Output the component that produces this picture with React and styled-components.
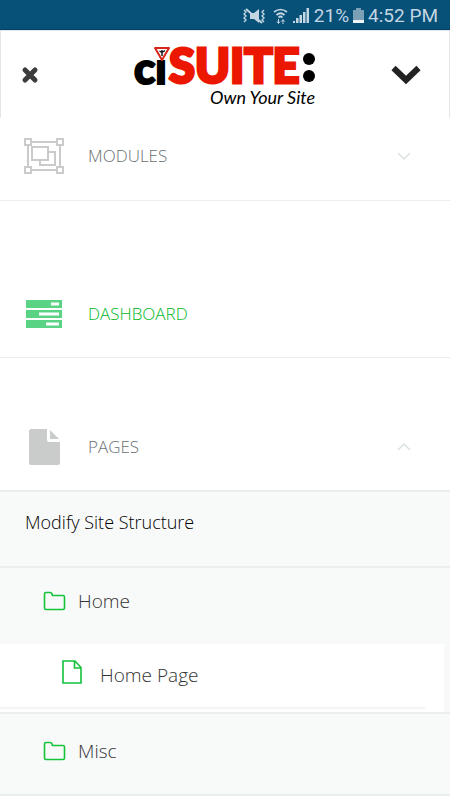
import { useState } from "react";
import styled, { createGlobalStyle } from "styled-components";

const GlobalStyle = createGlobalStyle`
  * {
    box-sizing: border-box;
  }

  body {
    margin: 0;
    background: #fff;
    font-family: "Open Sans", "Noto Sans", sans-serif;
    font-weight: 300;
  }

  button {
    padding: 0;
    border: 0;
    background: none;
    font: inherit;
    color: inherit;
    cursor: pointer;
  }

  svg {
    display: block;
    flex-shrink: 0;
  }
`;

const StatusBar = styled.div`
  display: flex;
  align-items: center;
  justify-content: flex-end;
  gap: 4px;
  height: 30px;
  padding: 2px 12px 0 0;
  border-bottom: 1px solid #063f6b;
  background: #075078;
  color: #c3d6e2;
  font: 400 19px/28px Roboto, sans-serif;
`;

const Header = styled.header`
  display: flex;
  align-items: center;
  height: 88px;
  padding: 0 28px 0 20px;
  border: solid #e6e6e6;
  border-width: 1px 1px 0;
`;

const HeaderButton = styled.button`
  display: flex;
  flex: 1;
  justify-content: ${({ $end }) => ($end ? "flex-end" : "flex-start")};
`;

const MenuRow = styled.button`
  display: flex;
  align-items: center;
  width: 100%;
  padding: ${({ $top }) => $top}px 38px ${({ $bottom }) => $bottom}px 22px;
  border-bottom: ${({ $thick }) => ($thick ? 2 : 1)}px solid #eaeeef;
  color: ${({ $active }) => ($active ? "#00b824" : "#6a7071")};
  font-size: 17px;
  line-height: 24px;
  text-align: left;
`;

const MenuIcon = styled.span`
  display: flex;
  align-items: center;
  justify-content: center;
  width: 44px;
  height: 44px;
  margin-right: 22px;
`;

const MenuLabel = styled.span`
  flex: 1;
`;

const Panel = styled.section`
  background: #f8fafa;
`;

const PanelRow = styled.a`
  display: flex;
  align-items: center;
  gap: 12px;
  padding: ${({ $top }) => $top}px 25px ${({ $bottom }) => $bottom}px 43px;
  border-bottom: ${({ $line }) => ($line ? "2px solid #eaeeee" : "0")};
  color: #333;
  font-size: 19px;
  line-height: 28px;
  text-decoration: none;
`;

const StructureRow = styled(PanelRow)`
  padding-left: 25px;
  color: #000;
  font-size: 18px;
`;

const SubList = styled.div`
  padding-right: 6px;
  border-bottom: 2px solid #eaeeee;
`;

const SubItem = styled.a`
  display: flex;
  gap: 18px;
  padding: 15px 19px 16px 62px;
  background: #fff;
  color: #333;
  font-size: 19px;
  line-height: 32px;
  text-decoration: none;
`;

const SubLine = styled.div`
  height: 5px;
  padding-right: 19px;
  background: #fff;

  &::before {
    content: "";
    display: block;
    height: 2px;
    background: #f2f5f5;
  }
`;

const StatusIcons = () => (
  <svg width="67" height="18" viewBox="0 0 67 18" fill="none" stroke="#c3d6e2" aria-hidden="true">
    <path d="M7 6h4l5-4v14l-5-4H7z" fill="#c3d6e2" stroke="none" />
    <path d="M3 2l16 14" strokeWidth="2" />
    <path d="M1 3l2 2-2 2 2 2-2 2 2 2-2 2M21 3l-2 2 2 2-2 2 2 2-2 2 2 2" strokeWidth="1.4" />
    <path d="M31 5q6.500-5 13 0M33.500 8q4-3.500 8 0M35.500 10.500q2-2 4 0" strokeWidth="1.700" />
    <path d="M35.500 12v4M34 14.500l1.500 2 1.500-2M40 17v-4M38.500 14.500l1.500-2 1.500 2" strokeWidth="1" />
    <path d="M50 16h2v-2h-2zM53 16h2.500v-5H53zM56.500 16h2.500V8h-2.500zM60 16h2.500V5H60zM63.500 16H66V1h-2.500z" fill="#c3d6e2" stroke="none" />
  </svg>
);

const Battery = () => (
  <svg width="11" height="15" viewBox="0 0 11 15" aria-hidden="true">
    <path d="M3 0h5v2h3v10H0V2h3z" fill="#7ba0b5" />
    <path d="M0 12h11v3H0z" fill="#eef4f7" />
  </svg>
);

const Logo = () => (
  <svg width="192" height="86" viewBox="0 0 192 86" role="img" aria-label="ciSUITE: Own Your Site">
    <g fontFamily="Lato, sans-serif" fontWeight="900">
      <text x="9" y="52" fontSize="44" fill="#000" stroke="#000" strokeWidth="2">ci</text>
      <path d="M29 11h16v17H29z" fill="#fff" />
      <text x="44" y="51" fontSize="47" fill="#ec1700" stroke="#ec1700" strokeWidth="3">SUITE</text>
    </g>
    <path d="M30 16h14l-7 12z" fill="#fff" stroke="#d8261c" strokeWidth="2" strokeLinejoin="round" />
    <path d="M37 24v-6M34.500 19l2.500 1.500 3-2" fill="none" stroke="#111" strokeWidth="1.400" />
    <circle cx="184" cy="27" r="6" fill="#000" />
    <circle cx="184" cy="44" r="6" fill="#000" />
    <text
      x="85"
      y="72"
      fontFamily="Lato, sans-serif"
      fontStyle="italic"
      fontWeight="400"
      fontSize="18"
      fill="#000"
    >
      Own Your Site
    </text>
  </svg>
);

const Chevron = ({ up }) => (
  <svg width="16" height="10" viewBox="0 0 16 10" fill="none" stroke="#dce2e4" strokeWidth="1.500" aria-hidden="true">
    <path d={up ? "M2 8l6-6 6 6" : "M2 2l6 6 6-6"} />
  </svg>
);

const GroupIcon = () => (
  <svg width="40" height="36" viewBox="0 0 40 36" fill="none" stroke="#cacccb" strokeWidth="2" aria-hidden="true">
    <path d="M7 4h26M7 32h26M4 7v22M36 7v22" />
    <path d="M1 1h6v6H1zM33 1h6v6h-6zM1 29h6v6H1zM33 29h6v6h-6z" />
    <path d="M8 9h16v13H8zM24 14h7v13H16v-5" />
  </svg>
);

const ServerIcon = () => (
  <svg width="36" height="28" viewBox="0 0 36 28" aria-hidden="true">
    <path d="M0 0h36v8H0zM0 10h36v8H0zM0 20h36v8H0z" fill="#5bd384" />
    <path d="M25 2.500h8v3h-8zM13 12.500h20v3H13zM20 22.500h13v3H20z" fill="#fff" />
  </svg>
);

const FileIcon = () => (
  <svg width="31" height="36" viewBox="0 0 31 36" fill="#cacccb" aria-hidden="true">
    <path d="M2 0h16v11q0 2 2 2h11v21q0 2-2 2H2q-2 0-2-2V2q0-2 2-2z" />
    <path d="M21 1l9 9h-9z" />
  </svg>
);

const FolderOutline = () => (
  <svg width="23" height="20" viewBox="0 0 23 20" fill="none" stroke="#15c23a" strokeWidth="1.600" aria-hidden="true">
    <path d="M1.500 3q0-1.500 1.500-1.500h4Q9 1.500 9.500 4.500H20q1.500 0 1.500 1.500v11q0 1.500-1.500 1.500H3q-1.500 0-1.500-1.500z" />
  </svg>
);

const PageOutline = () => (
  <svg width="20" height="26" viewBox="0 0 20 26" fill="none" stroke="#15c23a" strokeWidth="1.600" aria-hidden="true">
    <path d="M1 2h12l6 6.500V24H1zM12.500 2v7H19" />
  </svg>
);

const App = () => {
  const [pagesOpen, setPagesOpen] = useState(true);

  return (
    <>
      <GlobalStyle />
      <StatusBar>
        <StatusIcons />
        <span>21%</span>
        <Battery />
        <span>4:52 PM</span>
      </StatusBar>
      <Header>
        <HeaderButton aria-label="Close menu">
          <svg width="18" height="18" viewBox="0 0 18 18" stroke="#3d3d3d" strokeWidth="5" strokeLinecap="round">
            <path d="M4 4l10 10M14 4L4 14" />
          </svg>
        </HeaderButton>
        <Logo />
        <HeaderButton $end aria-label="More options">
          <svg width="30" height="20" viewBox="0 0 30 20" fill="none" stroke="#222" strokeWidth="6">
            <path d="M2.500 3L15 15 27.500 3" />
          </svg>
        </HeaderButton>
      </Header>

      <nav>
        <MenuRow $top={16} $bottom={22}>
          <MenuIcon><GroupIcon /></MenuIcon>
          <MenuLabel>MODULES</MenuLabel>
          <Chevron />
        </MenuRow>
        <MenuRow $active $top={91} $bottom={21}>
          <MenuIcon><ServerIcon /></MenuIcon>
          <MenuLabel>DASHBOARD</MenuLabel>
        </MenuRow>
        <MenuRow
          $thick
          $top={67}
          $bottom={21}
          aria-expanded={pagesOpen}
          onClick={() => setPagesOpen(!pagesOpen)}
        >
          <MenuIcon><FileIcon /></MenuIcon>
          <MenuLabel>PAGES</MenuLabel>
          <Chevron up={pagesOpen} />
        </MenuRow>

        {pagesOpen && (
          <Panel>
            <StructureRow href="#structure" $line $top={16} $bottom={30}>
              Modify Site Structure
            </StructureRow>
            <PanelRow href="#home" $top={19} $bottom={29}>
              <FolderOutline />
              Home
            </PanelRow>
            <SubList>
              <SubItem href="#home-page">
                <PageOutline />
                Home Page
              </SubItem>
              <SubLine />
            </SubList>
            <PanelRow href="#misc" $line $top={23} $bottom={29}>
              <FolderOutline />
              Misc
            </PanelRow>
          </Panel>
        )}
      </nav>
    </>
  );
};

export default App;
